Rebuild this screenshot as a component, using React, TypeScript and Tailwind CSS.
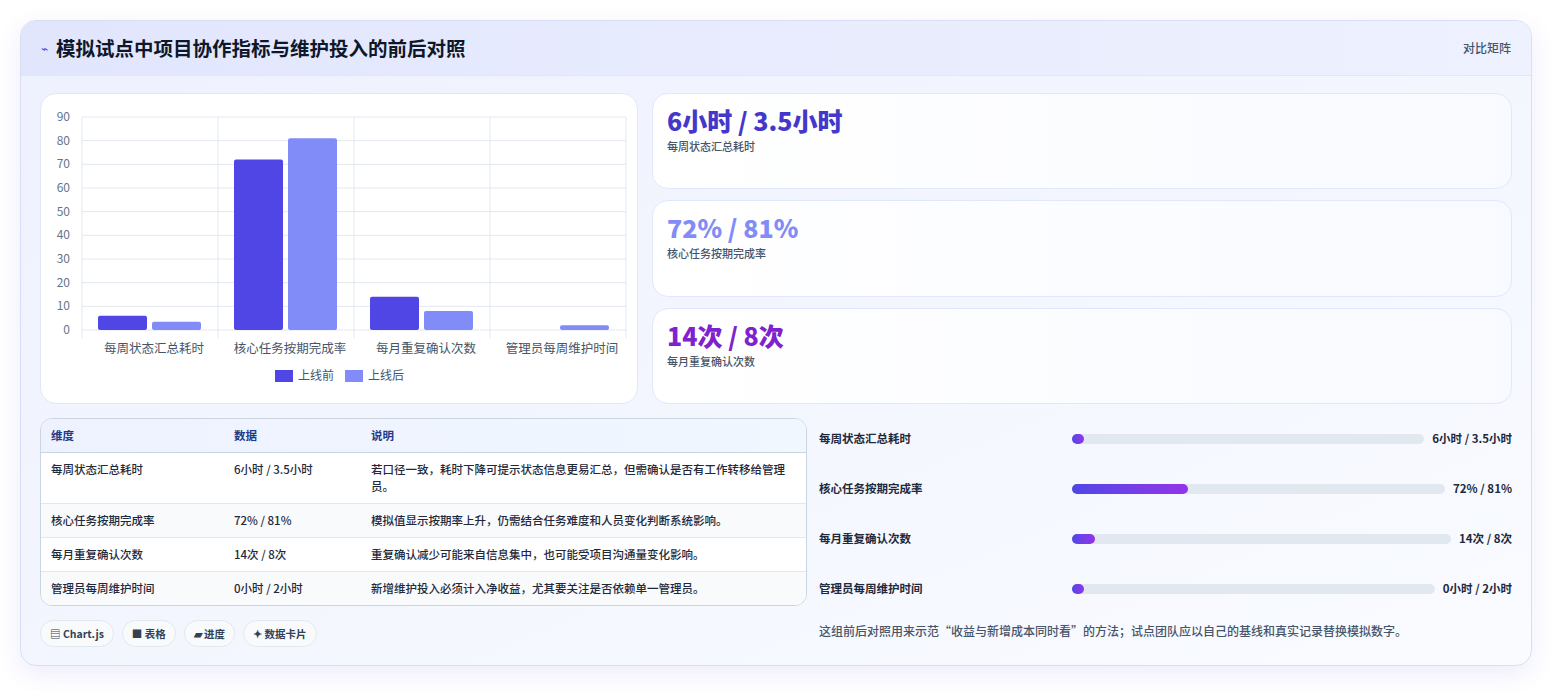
import React from 'react'

const FONT = '"Noto Sans CJK SC", "Noto Sans", sans-serif'

const cats = [
  { name: '每周状态汇总耗时', a: 6, b: 3.5, data: '6小时 / 3.5小时', note: '若口径一致，耗时下降可提示状态信息更易汇总，但需确认是否有工作转移给管理员。', fill: 3 },
  { name: '核心任务按期完成率', a: 72, b: 81, data: '72% / 81%', note: '模拟值显示按期率上升，仍需结合任务难度和人员变化判断系统影响。', fill: 31 },
  { name: '每月重复确认次数', a: 14, b: 8, data: '14次 / 8次', note: '重复确认减少可能来自信息集中，也可能受项目沟通量变化影响。', fill: 6 },
  { name: '管理员每周维护时间', a: 0, b: 2, data: '0小时 / 2小时', note: '新增维护投入必须计入净收益，尤其要关注是否依赖单一管理员。', fill: 2 },
]

function Chart() {
  const x0 = 41, x1 = 585, yTop = 23, yBot = 236
  const k = (yBot - yTop) / 90
  const cw = (x1 - x0) / 4
  return (
    <svg width="597" height="310" viewBox="0 0 597 310" style={{ fontFamily: FONT }}>
      {Array.from({ length: 10 }).map((_, i) => {
        const y = yBot - i * 10 * k
        return (
          <g key={i}>
            <line x1={x0} x2={x1} y1={y} y2={y} stroke="#e2e8f0" />
            <text x={29} y={y + 4} fontSize="12" fill="#64748b" textAnchor="end">{i * 10}</text>
          </g>
        )
      })}
      {[0, 1, 2, 3, 4].map((i) => (
        <line key={i} x1={x0 + i * cw} x2={x0 + i * cw} y1={yTop} y2={yBot + 8} stroke="#e2e8f0" />
      ))}
      {cats.map((c, i) => {
        const cx = x0 + i * cw
        return (
          <g key={c.name}>
            {c.a > 0 && <rect x={cx + 16} y={yBot - c.a * k} width={49} height={c.a * k} rx={2} fill="#4f46e5" />}
            <rect x={cx + 70} y={yBot - c.b * k} width={49} height={c.b * k} rx={2} fill="#818cf8" />
            <text x={cx + cw / 2 + 4} y={259} fontSize="12.5" fill="#475569" textAnchor="middle">{c.name}</text>
          </g>
        )
      })}
      <rect x={234} y={276} width={18} height={12} fill="#4f46e5" />
      <text x={257} y={286} fontSize="12" fill="#475569">上线前</text>
      <rect x={304} y={276} width={18} height={12} fill="#818cf8" />
      <text x={327} y={286} fontSize="12" fill="#475569">上线后</text>
    </svg>
  )
}

function Stat({ value, label, color }: { value: string; label: string; color: string }) {
  return (
    <div className="flex-1 rounded-2xl border border-[#e0e7ff] bg-gradient-to-r from-white to-[#f8faff] px-[14px] pt-[10px]">
      <div className={`text-[25px] font-extrabold leading-[32px] ${color}`}>{value}</div>
      <div className="mt-[2px] text-[11px] font-medium text-[#475569]">{label}</div>
    </div>
  )
}

export default function App() {
  return (
    <div className="min-h-[691px] bg-white p-5" style={{ fontFamily: FONT }}>
      <div className="overflow-hidden rounded-2xl border border-[#d9def5] bg-gradient-to-br from-[#eef1fe] to-[#f9fbff] shadow-[0_8px_24px_rgba(79,70,229,0.10)]">
        <div className="flex h-[55px] items-center justify-between border-b border-[#e0e6fb] bg-gradient-to-r from-[#e2e6fd] to-[#eef1fe] px-5">
          <div className="flex items-center gap-2">
            <span className="text-[12px] text-[#4f46e5]">⌁</span>
            <span className="text-[19.5px] font-bold text-[#0f172a]">模拟试点中项目协作指标与维护投入的前后对照</span>
          </div>
          <span className="text-[12px] font-medium text-[#475569]">对比矩阵</span>
        </div>
        <div className="px-[19px] pb-[18px] pt-[17px]">
          <div className="flex gap-[14px]">
            <div className="h-[311px] w-[598px] shrink-0 rounded-2xl border border-[#e2e8f0] bg-white">
              <Chart />
            </div>
            <div className="flex flex-1 flex-col gap-[11px]">
              <Stat value="6小时 / 3.5小时" label="每周状态汇总耗时" color="text-[#4338ca]" />
              <Stat value="72% / 81%" label="核心任务按期完成率" color="text-[#818cf8]" />
              <Stat value="14次 / 8次" label="每月重复确认次数" color="text-[#7e22ce]" />
            </div>
          </div>
          <div className="mt-[14px] flex gap-3">
            <div className="w-[767px] shrink-0">
              <div className="overflow-hidden rounded-xl border border-[#cbd5e1] bg-white">
                <table className="w-full text-[11.5px] text-[#1e293b]">
                  <thead>
                    <tr className="h-[33px] border-b border-[#cbd5e1] bg-gradient-to-r from-[#eef2ff] to-[#f0f7ff] text-left font-semibold text-[#1e3a8a]">
                      <th className="w-[183px] pl-[10px] font-semibold">维度</th>
                      <th className="w-[137px] pl-[10px] font-semibold">数据</th>
                      <th className="pl-[10px] font-semibold">说明</th>
                    </tr>
                  </thead>
                  <tbody>
                    {cats.map((c, i) => (
                      <tr key={c.name} className={`border-b border-[#e2e8f0] last:border-b-0 ${i % 2 === 1 ? 'bg-[#f8fafc]' : 'bg-white'}`}>
                        <td className="py-[8px] pl-[10px] align-top leading-[17px] font-medium">{c.name}</td>
                        <td className="py-[8px] pl-[10px] align-top leading-[17px] font-medium">{c.data}</td>
                        <td className="py-[8px] pl-[10px] pr-2 align-top leading-[17px] font-medium">{c.note}</td>
                      </tr>
                    ))}
                  </tbody>
                </table>
              </div>
              <div className="mt-[14px] flex gap-2 text-[10.5px] font-semibold text-[#334155]">
                {['▤ Chart.js', '■ 表格', '▰ 进度', '✦ 数据卡片'].map((t) => (
                  <span key={t} className="rounded-full border border-[#e2e8f0] bg-[#f8fafc] px-[9px] py-[5px]">{t}</span>
                ))}
              </div>
            </div>
            <div className="flex-1">
              <div className="flex flex-col gap-[28px] pt-[10px]">
                {cats.map((c) => (
                  <div key={c.name} className="flex h-[22px] items-center gap-2 text-[11.5px] font-semibold text-[#1e293b]">
                    <span className="w-[245px] shrink-0">{c.name}</span>
                    <div className="h-[10px] flex-1 rounded-full bg-[#e2e8f0]">
                      <div className="h-full min-w-[12px] rounded-full bg-gradient-to-r from-[#4f46e5] to-[#9333ea]" style={{ width: `${c.fill}%` }} />
                    </div>
                    <span className="shrink-0 whitespace-nowrap text-right">{c.data}</span>
                  </div>
                ))}
              </div>
              <p className="mt-[22px] text-[12px] font-medium text-[#475569]">这组前后对照用来示范“收益与新增成本同时看”的方法；试点团队应以自己的基线和真实记录替换模拟数字。</p>
            </div>
          </div>
        </div>
      </div>
    </div>
  )
}
